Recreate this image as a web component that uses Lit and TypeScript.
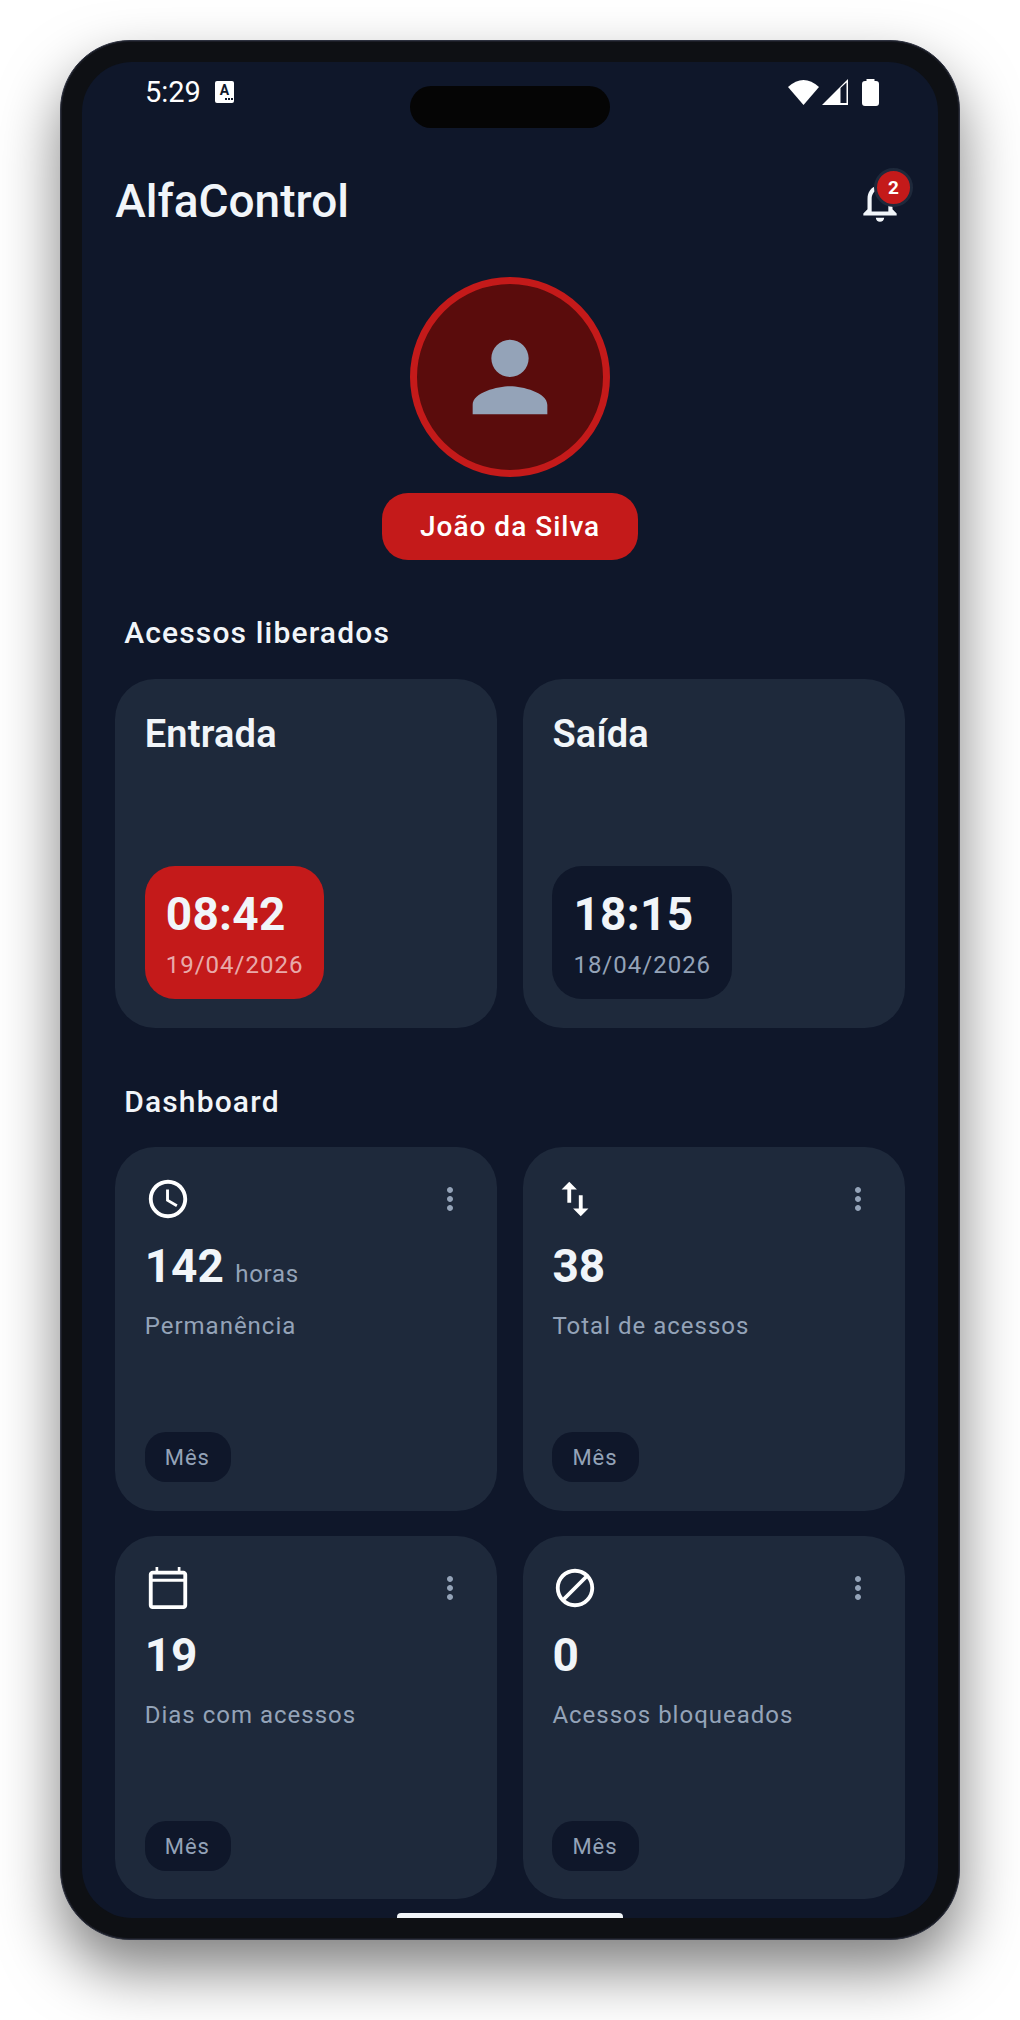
import { LitElement, html, css, svg } from 'lit';
import { customElement } from 'lit/decorators.js';

const ICONS = {
  bell: svg`<path d="M12 22c1.1 0 2-.9 2-2h-4c0 1.1.9 2 2 2zm6-6v-5c0-3.07-1.63-5.64-4.5-6.32V4c0-.83-.67-1.5-1.5-1.5s-1.5.67-1.5 1.5v.68C7.64 5.36 6 7.92 6 11v5l-2 2v1h16v-1l-2-2zm-2 1H8v-6c0-2.48 1.51-4.5 4-4.5s4 2.02 4 4.5v6z"/>`,
  person: svg`<path d="M12 12c2.21 0 4-1.79 4-4s-1.79-4-4-4-4 1.79-4 4 1.79 4 4 4zm0 2c-2.67 0-8 1.34-8 4v2h16v-2c0-2.66-5.33-4-8-4z"/>`,
  clock: svg`<path d="M11.99 2C6.47 2 2 6.48 2 12s4.47 10 9.99 10C17.52 22 22 17.52 22 12S17.52 2 11.99 2zM12 20c-4.42 0-8-3.58-8-8s3.58-8 8-8 8 3.58 8 8-3.58 8-8 8zm.5-13H11v6l5.25 3.15.75-1.23-4.5-2.67z"/>`,
  swap: svg`<path d="M16 17.01V10h-2v7.01h-3L15 21l4-3.99h-3zM9 3L5 6.99h3V14h2V6.99h3L9 3z"/>`,
  calendar: svg`<path fill-rule="evenodd" d="M20 3h-1.5V1h-1.4v2H6.9V1H5.5v2H4c-1.1 0-2 .9-2 2v16c0 1.1.9 2 2 2h16c1.1 0 2-.9 2-2V5c0-1.1-.9-2-2-2zM4 5h16v2.2H4zM4 8.8h16V21H4z"/>`,
  block: svg`<path d="M12 2C6.48 2 2 6.48 2 12s4.48 10 10 10 10-4.48 10-10S17.52 2 12 2zM4 12c0-4.42 3.58-8 8-8 1.85 0 3.55.63 4.9 1.69L5.69 16.9C4.63 15.55 4 13.85 4 12zm8 8c-1.85 0-3.55-.63-4.9-1.69L18.31 7.1C19.37 8.45 20 10.15 20 12c0 4.42-3.58 8-8 8z"/>`,
  more: svg`<path d="M12 8c1.1 0 2-.9 2-2s-.9-2-2-2-2 .9-2 2 .9 2 2 2zm0 2c-1.1 0-2 .9-2 2s.9 2 2 2 2-.9 2-2-.9-2-2-2zm0 6c-1.1 0-2 .9-2 2s.9 2 2 2 2-.9 2-2-.9-2-2-2z"/>`,
};

const STATS = [
  { icon: ICONS.clock, value: '142', unit: 'horas', label: 'Permanência' },
  { icon: ICONS.swap, value: '38', unit: '', label: 'Total de acessos' },
  { icon: ICONS.calendar, value: '19', unit: '', label: 'Dias com acessos' },
  { icon: ICONS.block, value: '0', unit: '', label: 'Acessos bloqueados' },
];

@customElement('app-root')
export class AppRoot extends LitElement {
  static styles = css`
    :host {
      display: block;
      width: 1020px;
      height: 2020px;
      background: #fff;
      font-family: Roboto, 'Liberation Sans', sans-serif;
      overflow: hidden;
    }

    .page {
      padding: 40px 60px;
    }

    .phone {
      box-sizing: border-box;
      width: 900px;
      height: 1900px;
      padding: 21px;
      background: #0e1014;
      border: 1px solid #2e3240;
      border-radius: 70px;
      box-shadow: inset 0 0 0 1px #1b1d26, 0 30px 60px rgba(0, 0, 0, 0.5);
    }

    .screen {
      position: relative;
      height: 100%;
      background: #0f172a;
      border-radius: 50px;
      overflow: hidden;
      display: flex;
      flex-direction: column;
    }

    /* status bar */
    .status {
      height: 60px;
      flex: none;
      display: flex;
      align-items: center;
      padding: 0 59px 0 63px;
      color: #fff;
    }

    .clock {
      font-size: 29px;
      line-height: 60px;
    }

    .a-icon {
      width: 19px;
      height: 22px;
      margin-left: 14px;
      background: #fff;
      border-radius: 2px;
      color: #0f172a;
      display: flex;
      flex-direction: column;
      align-items: center;
      font-size: 14px;
      font-weight: 700;
      line-height: 15px;
      padding-top: 2px;
      box-sizing: border-box;
    }

    .a-dots {
      align-self: flex-end;
      display: flex;
      gap: 1px;
      margin: 0 1px 0 0;
    }

    .a-dots i {
      width: 2px;
      height: 2px;
      background: #0f172a;
    }

    .status-icons {
      margin-left: auto;
      display: flex;
      align-items: center;
    }

    .status-icons svg {
      display: block;
      fill: #fff;
    }

    .island {
      position: absolute;
      top: 24px;
      left: 328px;
      width: 200px;
      height: 42px;
      background: #050505;
      border-radius: 21px;
    }

    .home-bar {
      position: absolute;
      bottom: 0;
      left: 315px;
      width: 226px;
      height: 5px;
      background: #f1f5f9;
      border-radius: 4px 4px 0 0;
    }

    /* content */
    .content {
      padding: 54px 33px 0 33.2px;
      display: flex;
      flex-direction: column;
    }

    .topbar {
      display: flex;
      justify-content: space-between;
      align-items: center;
      height: 50px;
    }

    .brand {
      font-size: 46px;
      font-weight: 500;
      color: #f1f5f9;
    }

    .bell {
      position: relative;
      width: 50px;
      height: 50px;
    }

    .bell svg {
      display: block;
      width: 50px;
      height: 50px;
      fill: #f1f5f9;
    }

    .badge {
      position: absolute;
      top: -8px;
      right: -8px;
      box-sizing: border-box;
      width: 39px;
      height: 39px;
      border: 3px solid #1e293b;
      border-radius: 50%;
      background: #c41a1a;
      color: #fff;
      font-size: 19px;
      font-weight: 700;
      display: flex;
      align-items: center;
      justify-content: center;
    }

    .profile {
      margin-top: 51px;
      display: flex;
      flex-direction: column;
      align-items: center;
    }

    .avatar {
      box-sizing: border-box;
      width: 200px;
      height: 200px;
      border: 7px solid #c41a1a;
      border-radius: 50%;
      background: #5a0c0c;
      display: flex;
      align-items: center;
      justify-content: center;
    }

    .avatar svg {
      width: 112px;
      height: 112px;
      fill: #94a3b8;
    }

    .name {
      margin-top: 16px;
      width: 256px;
      height: 67px;
      border-radius: 26px;
      background: #c41a1a;
      color: #fff;
      font-size: 28px;
      font-weight: 500;
      letter-spacing: 1px;
      display: flex;
      align-items: center;
      justify-content: center;
    }

    .section-title {
      margin: 53px 0 26px 9px;
      font-size: 30px;
      font-weight: 500;
      line-height: 40px;
      letter-spacing: 1.15px;
      color: #f1f5f9;
    }

    .section-title.dash {
      margin-top: 54px;
      margin-bottom: 25px;
    }

    .grid {
      display: grid;
      grid-template-columns: 1fr 1fr;
      gap: 25px 25.6px;
    }

    .card {
      box-sizing: border-box;
      background: #1e293b;
      border-radius: 40px;
      padding: 29px 29.5px;
      display: flex;
      flex-direction: column;
      align-items: flex-start;
    }

    .access {
      height: 349px;
    }

    .access h3 {
      margin: 0;
      font-size: 38px;
      font-weight: 600;
      line-height: 52px;
      letter-spacing: 0.2px;
      color: #f1f5f9;
    }

    .time-box {
      margin-top: auto;
      box-sizing: border-box;
      height: 133px;
      padding: 24px 21px 0;
      border-radius: 30px;
      background: #0f172a;
      color: #94a3b8;
    }

    .time-box.on {
      background: #c41a1a;
      color: rgba(255, 255, 255, 0.65);
    }

    .time {
      font-size: 46px;
      font-weight: 700;
      line-height: 48px;
      letter-spacing: 0.3px;
      color: #f1f5f9;
    }

    .date {
      margin-top: 11px;
      font-size: 24px;
      line-height: 32px;
      letter-spacing: 1px;
    }

    .stat {
      height: 363.5px;
      padding-bottom: 28.5px;
    }

    .stat-head {
      align-self: stretch;
      display: flex;
      justify-content: space-between;
      height: 46px;
    }

    .stat-head svg {
      display: block;
      width: 46px;
      height: 46px;
      fill: #fff;
    }

    .stat-head svg.more {
      width: 36px;
      height: 36px;
      margin-top: 5px;
      fill: #94a3b8;
    }

    .value {
      margin-top: 17px;
      font-size: 46px;
      font-weight: 700;
      line-height: 54px;
      color: #f1f5f9;
    }

    .unit {
      font-size: 24px;
      font-weight: 400;
      line-height: 1;
      letter-spacing: 0.7px;
      color: #94a3b8;
    }

    .label {
      margin-top: 17px;
      font-size: 24px;
      line-height: 32px;
      letter-spacing: 1px;
      color: #94a3b8;
    }

    .chip {
      margin-top: auto;
      box-sizing: border-box;
      height: 50px;
      padding: 1px 21px 0 20px;
      border-radius: 21px;
      background: #0f172a;
      color: #94a3b8;
      font-size: 22px;
      letter-spacing: 1px;
      display: flex;
      align-items: center;
    }
  `;

  private renderStat(s: (typeof STATS)[number]) {
    return html`
      <div class="card stat">
        <div class="stat-head">
          <svg viewBox="0 0 24 24">${s.icon}</svg>
          <svg class="more" viewBox="0 0 24 24">${ICONS.more}</svg>
        </div>
        <div class="value">${s.value}${s.unit ? html` <span class="unit">${s.unit}</span>` : ''}</div>
        <div class="label">${s.label}</div>
        <div class="chip">Mês</div>
      </div>
    `;
  }

  render() {
    return html`
      <div class="page">
        <div class="phone">
          <div class="screen">
            <div class="status">
              <span class="clock">5:29</span>
              <span class="a-icon">A<span class="a-dots"><i></i><i></i><i></i></span></span>
              <div class="status-icons">
                <svg width="31" height="25" viewBox="0 0 31 25"><path d="M0 7Q15.5-7 31 7L15.5 25Z"/></svg>
                <svg style="margin-left:3px" width="26" height="26" viewBox="0 0 26 26">
                  <path fill-rule="evenodd" d="M0 26L26 0V26ZM18.5 9V24H24.5V3.5Z"/>
                </svg>
                <svg style="margin-left:14px" width="17" height="27" viewBox="0 0 17 27">
                  <path d="M4.5 0h8v2H14a3 3 0 0 1 3 3v19a3 3 0 0 1-3 3H3a3 3 0 0 1-3-3V5a3 3 0 0 1 3-3h1.5z"/>
                </svg>
              </div>
            </div>
            <div class="island"></div>

            <div class="content">
              <div class="topbar">
                <div class="brand">AlfaControl</div>
                <div class="bell">
                  <svg viewBox="0 0 24 24">${ICONS.bell}</svg>
                  <span class="badge">2</span>
                </div>
              </div>

              <div class="profile">
                <div class="avatar"><svg viewBox="0 0 24 24">${ICONS.person}</svg></div>
                <div class="name">João da Silva</div>
              </div>

              <div class="section-title">Acessos liberados</div>
              <div class="grid">
                <div class="card access">
                  <h3>Entrada</h3>
                  <div class="time-box on">
                    <div class="time">08:42</div>
                    <div class="date">19/04/2026</div>
                  </div>
                </div>
                <div class="card access">
                  <h3>Saída</h3>
                  <div class="time-box">
                    <div class="time">18:15</div>
                    <div class="date">18/04/2026</div>
                  </div>
                </div>
              </div>

              <div class="section-title dash">Dashboard</div>
              <div class="grid">${STATS.map(s => this.renderStat(s))}</div>
            </div>

            <div class="home-bar"></div>
          </div>
        </div>
      </div>
    `;
  }
}
